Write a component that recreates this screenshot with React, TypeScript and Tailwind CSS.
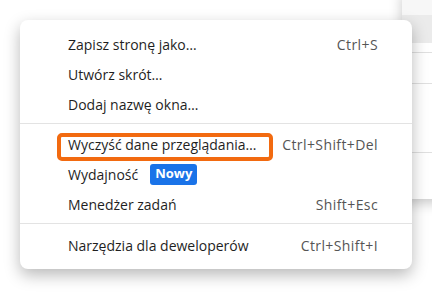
import React from "react";

function Row({
  label,
  shortcut,
  badge,
}: {
  label: string;
  shortcut?: string;
  badge?: string;
}) {
  return (
    <div className="flex h-[30px] items-center pl-[48px] pr-[34px]">
      <span className="text-[#1f1f1f]">{label}</span>
      {badge && (
        <span className="ml-[12px] flex h-[21px] items-center rounded-[3px] bg-[#1a73e8] px-[5px] text-[13px] font-bold text-white">
          {badge}
        </span>
      )}
      <span className="flex-1" />
      {shortcut && <span className="tracking-[0.4px] text-[#555555]">{shortcut}</span>}
    </div>
  );
}

function Sep({ last }: { last?: boolean }) {
  return (
    <div className={last ? "mt-[4px] mb-[6px] h-px bg-[#e3e3e3]" : "mt-[4px] mb-[5px] h-px bg-[#e3e3e3]"} />
  );
}

export default function App() {
  return (
    <div className="relative h-[304px] w-[432px] overflow-hidden bg-white font-['Open_Sans',sans-serif] text-[14px]">
      {/* parent menu behind */}
      <div className="absolute left-[402px] top-[-10px] flex h-[209px] w-[60px] flex-col bg-white shadow-[0_4px_12px_rgba(0,0,0,0.22)]">
        <div className="h-[25px] bg-[#f7f7f7]" />
        <div className="h-[28px] bg-[#ebebeb]" />
        <div className="mt-[9px] h-px bg-[#e0e0e0]" />
        <div className="mt-[30px] h-px bg-[#e0e0e0]" />
        <div className="mt-[68px] h-px bg-[#e0e0e0]" />
      </div>

      {/* submenu */}
      <div className="absolute left-[20px] top-[20px] w-[392px] rounded-lg bg-white pt-[9px] pb-[9px] shadow-[0_6px_16px_rgba(0,0,0,0.28)]">
        <Row label="Zapisz stronę jako…" shortcut="Ctrl+S" />
        <Row label="Utwórz skrót…" />
        <Row label="Dodaj nazwę okna…" />
        <Sep />
        <Row label="Wyczyść dane przeglądania…" shortcut="Ctrl+Shift+Del" />
        <Row label="Wydajność" badge="Nowy" />
        <Row label="Menedżer zadań" shortcut="Shift+Esc" />
        <Sep last />
        <Row label="Narzędzia dla deweloperów" shortcut="Ctrl+Shift+I" />

        <div className="absolute left-[37px] top-[113px] h-[28px] w-[216px] rounded-[5px] border-[4px] border-[#f26a10]" />
      </div>
    </div>
  );
}
